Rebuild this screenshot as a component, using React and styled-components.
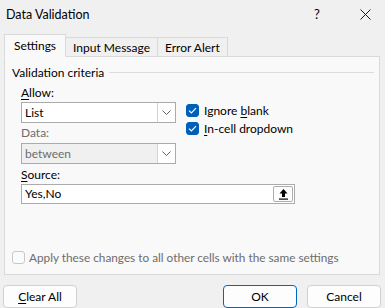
import styled, { createGlobalStyle } from 'styled-components';
import { useState } from "react";

const Global = createGlobalStyle`
    body {
        margin: 0;
        background: #f0f0f0;
        font-family: Lato, "Open Sans", sans-serif;
        font-size: 12px;
        color: #000;
    }
    u { text-decoration-thickness: 1px; text-underline-offset: 2px; }
`

function Chevron() {
    return (
        <svg width="9" height="5" viewBox="0 0 9 5">
            <path d="M0.5 0.5 L4.5 4.5 L8.5 0.5" fill="none" stroke="#5f5f5f" strokeWidth="1" />
        </svg>
    )
}

function Check() {
    return (
        <svg width="9" height="7" viewBox="0 0 9 7">
            <path d="M1 3.6 L3.4 6 L8 1.2" fill="none" stroke="#fff" strokeWidth="1.2" />
        </svg>
    )
}

export default function App() {
    const [ignore, setIgnore] = useState(true);
    const [dropdown, setDropdown] = useState(true);
    const [source, setSource] = useState('Yes,No');

    return (
        <Window>
            <Global />
            <TitleBar>
                <Title>Data Validation</Title>
                <Help>?</Help>
                <Close>
                    <svg width="11" height="11" viewBox="0 0 11 11">
                        <path d="M0.5 0.5 L10.5 10.5 M10.5 0.5 L0.5 10.5" stroke="#1a1a1a" strokeWidth="1" />
                    </svg>
                </Close>
            </TitleBar>
            <Tabs>
                <Tab $active>Settings</Tab>
                <Tab>Input Message</Tab>
                <Tab>Error Alert</Tab>
            </Tabs>
            <Panel>
                <GroupHead>
                    <span>Validation criteria</span>
                    <Rule />
                </GroupHead>
                <Content>
                    <Label><u>A</u>llow:</Label>
                    <Select>
                        <SelectText>List</SelectText>
                        <DropButton><Chevron /></DropButton>
                    </Select>
                    <Checks>
                        <CheckRow onClick={() => setIgnore(!ignore)}>
                            <Box $on={ignore}>{ignore && <Check />}</Box>
                            <span>Ignore <u>b</u>lank</span>
                        </CheckRow>
                        <CheckRow onClick={() => setDropdown(!dropdown)}>
                            <Box $on={dropdown}>{dropdown && <Check />}</Box>
                            <span><u>I</u>n-cell dropdown</span>
                        </CheckRow>
                    </Checks>
                    <Label $disabled $top={2}>Data:</Label>
                    <Select $disabled>
                        <SelectText $disabled>between</SelectText>
                        <DropButton><Chevron /></DropButton>
                    </Select>
                    <Label $top={3}><u>S</u>ource:</Label>
                    <SourceBox>
                        <SourceInput value={source} onChange={(e) => setSource(e.target.value)} />
                        <RefButton>
                            <svg width="11" height="12" viewBox="0 0 11 12">
                                <path d="M5.5 1 L1.5 5.5 H4 V9 H7 V5.5 H9.5 Z" fill="#000" />
                                <rect x="1" y="10.5" width="9" height="1.2" fill="#000" />
                            </svg>
                        </RefButton>
                    </SourceBox>
                </Content>
                <ApplyRow>
                    <Box $disabled />
                    <span>Apply these changes to all other cells with the same settings</span>
                </ApplyRow>
            </Panel>
            <Footer>
                <Button><u>C</u>lear All</Button>
                <Spacer />
                <Button $primary>OK</Button>
                <Button>Cancel</Button>
            </Footer>
        </Window>
    )
}

const Window = styled.div`
    width: 385px;
    height: 308px;
    overflow: hidden;
    display: flex;
    flex-direction: column;
    background: #f0f0f0;
`

const TitleBar = styled.div`
    height: 27px;
    display: flex;
    align-items: center;
    padding-top: 1px;
`

const Title = styled.div`
    flex: 1;
    padding-left: 6px;
    font-size: 12.5px;
`

const Help = styled.div`
    width: 10px;
    font-size: 13px;
    margin-right: 36px;
`

const Close = styled.div`
    display: flex;
    margin-right: 14px;
`

const Tabs = styled.div`
    height: 28px;
    display: flex;
    align-items: flex-end;
    padding-left: 4px;
    position: relative;
    z-index: 1;
`

const Tab = styled.div`
    height: ${p => p.$active ? '23px' : '19px'};
    display: flex;
    align-items: center;
    padding: 0 ${p => p.$active ? '9px' : '7px'};
    background: ${p => p.$active ? '#f9f9f9' : '#f0f0f0'};
    border: 1px solid #d9d9d9;
    border-bottom: ${p => p.$active ? '1px solid #f9f9f9' : 'none'};
    border-left: ${p => p.$active ? '1px solid #d9d9d9' : 'none'};
    margin-bottom: ${p => p.$active ? '-1px' : '0'};
    box-sizing: border-box;
    padding-top: ${p => p.$active ? '0' : '1px'};
`

const Panel = styled.div`
    margin: 0 5px 0 4px;
    height: 220px;
    box-sizing: border-box;
    background: #f9f9f9;
    border: 1px solid #d9d9d9;
    display: flex;
    flex-direction: column;
    padding-bottom: 8px;
`

const GroupHead = styled.div`
    display: flex;
    align-items: center;
    gap: 5px;
    margin: 8px 5px 0 7px;
    line-height: 16px;
`

const Rule = styled.div`
    flex: 1;
    height: 1px;
    background: #dcdcdc;
`

const Content = styled.div`
    display: grid;
    grid-template-columns: 155px 1fr;
    column-gap: 10px;
    justify-items: start;
    padding-left: 16px;
`

const Label = styled.div`
    grid-column: 1;
    line-height: 16px;
    margin-top: ${p => p.$top ?? 4}px;
    margin-bottom: ${p => p.$top === 2 ? 2 : 1}px;
    color: ${p => p.$disabled ? '#6d6d6d' : '#000'};
`

const Select = styled.div`
    grid-column: 1;
    width: 155px;
    height: 21px;
    box-sizing: border-box;
    border: 1px solid #ababab;
    background: ${p => p.$disabled ? '#f0f0f0' : '#fff'};
    display: flex;
    align-items: stretch;
`

const SelectText = styled.div`
    flex: 1;
    padding-left: 3px;
    display: flex;
    align-items: center;
    color: ${p => p.$disabled ? '#6d6d6d' : '#000'};
`

const DropButton = styled.div`
    width: 17px;
    border-left: 1px solid #d4d4d4;
    background: #fff;
    display: flex;
    align-items: center;
    justify-content: center;
`

const Checks = styled.div`
    grid-column: 2;
    grid-row: 2 / span 2;
    align-self: start;
    display: flex;
    flex-direction: column;
    gap: 3px;
    padding-top: 1px;
`

const CheckRow = styled.div`
    display: flex;
    align-items: center;
    gap: 5px;
    line-height: 15px;
    cursor: default;
`

const Box = styled.div`
    width: 13px;
    height: 13px;
    box-sizing: border-box;
    border-radius: 3px;
    background: ${p => p.$on ? '#005fb8' : '#fbfbfb'};
    border: 1px solid ${p => p.$on ? '#005fb8' : '#c8c8c8'};
    display: flex;
    align-items: center;
    justify-content: center;
`

const SourceBox = styled.div`
    grid-column: 1 / -1;
    width: 274px;
    height: 20px;
    box-sizing: border-box;
    border: 1px solid #ababab;
    background: #fff;
    display: flex;
    align-items: center;
    padding-right: 1px;
`

const SourceInput = styled.input`
    flex: 1;
    min-width: 0;
    border: none;
    outline: none;
    background: transparent;
    font: inherit;
    padding: 0 0 0 3px;
    caret-color: #000;
`

const RefButton = styled.div`
    width: 20px;
    height: 16px;
    box-sizing: border-box;
    border: 1px solid #adadad;
    border-radius: 2px;
    background: #fdfdfd;
    display: flex;
    align-items: center;
    justify-content: center;
`

const ApplyRow = styled.div`
    margin-top: auto;
    margin-left: 7px;
    display: flex;
    align-items: center;
    gap: 4px;
    line-height: 16px;
    color: #6d6d6d;
    font-size: 11.8px;
`

const Footer = styled.div`
    display: flex;
    gap: 10px;
    padding: 10px 4px 0 3px;
`

const Spacer = styled.div`
    flex: 1;
`

const Button = styled.button`
    width: 74px;
    height: 23px;
    box-sizing: border-box;
    font: inherit;
    color: #000;
    background: #fdfdfd;
    border: 1px solid ${p => p.$primary ? '#0067c0' : '#d0d0d0'};
    border-radius: 4px;
    padding: 0;
`
